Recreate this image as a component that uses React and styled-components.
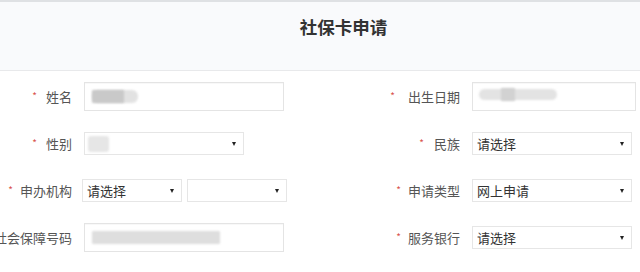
import styled, { createGlobalStyle } from "styled-components";

const GlobalStyle = createGlobalStyle`
    body {
        margin: 0;
        background: #ffffff;
        font-family: "Noto Sans CJK SC", "Noto Sans", sans-serif;
    }
`

const Page = styled.div`
    width: 640px;
    height: 272px;
    overflow: hidden;
    background: #ffffff;
`

const Header = styled.div`
    height: 68px;
    border-top: 2px solid #dfe1e4;
    border-bottom: 1px solid #e8e9eb;
    background: #f9fafc;
    display: flex;
    justify-content: center;
    align-items: flex-start;
    padding-left: 47px;
    box-sizing: content-box;
`

const Title = styled.h1`
    margin: 12px 0 0;
    font-size: 17.5px;
    font-weight: 700;
    color: #333333;
    letter-spacing: 0;
`

const Form = styled.div`
    padding-top: 2px;
`

const Row = styled.div`
    height: 47px;
    display: flex;
    align-items: center;
`

const Field = styled.div`
    width: ${p => p.$width}px;
    display: flex;
    align-items: center;
    flex-shrink: 0;
`

const Label = styled.div`
    width: ${p => p.$width}px;
    flex-shrink: 0;
    margin-right: 12px;
    text-align: right;
    white-space: nowrap;
    direction: rtl;
    font-size: 13px;
    color: #555555;
`

const Star = styled.span`
    color: #d9534f;
    font-size: 10px;
    margin-right: ${p => p.$gap}px;
    vertical-align: 2px;
`

const TextInput = styled.div`
    position: relative;
    width: ${p => p.$width}px;
    height: 29px;
    box-sizing: border-box;
    border: 1px solid #e4e4e4;
    background: #ffffff;
    box-shadow: inset 0 1px 1px rgba(0, 0, 0, 0.03);
`

const Select = styled.div`
    position: relative;
    width: ${p => p.$width}px;
    height: 23px;
    box-sizing: border-box;
    border: 1px solid #e6e6e6;
    background: #ffffff;
    display: flex;
    align-items: center;
    padding-left: 4px;
    font-size: 13px;
    color: #333333;
    & + & {
        margin-left: 5px;
    }
`

const Caret = styled.span`
    position: absolute;
    right: 7px;
    top: 9px;
    width: 0;
    height: 0;
    border-left: 2.5px solid transparent;
    border-right: 2.5px solid transparent;
    border-top: 4px solid #222222;
`

const Blur = styled.span`
    position: absolute;
    left: ${p => p.$x}px;
    top: ${p => p.$y}px;
    width: ${p => p.$w}px;
    height: ${p => p.$h}px;
    border-radius: ${p => p.$r || 3}px;
    background: ${p => p.$c};
    filter: blur(1.2px);
`

function Required({ text, gap = 8 }) {
    return (
        <span style={{ direction: "ltr", unicodeBidi: "isolate" }}>
            <Star $gap={gap}>*</Star>{text}
        </span>
    )
}

export default function App() {
    return (
        <Page>
            <GlobalStyle />
            <Header>
                <Title>社保卡申请</Title>
            </Header>
            <Form>
                <Row>
                    <Field $width={388}>
                        <Label $width={72}><Required text="姓名" gap={9} /></Label>
                        <TextInput $width={200}>
                            <Blur $x={7} $y={7} $w={46} $h={13} $r={6} $c="#e2e2e2" />
                            <Blur $x={7} $y={7} $w={32} $h={13} $r={1} $c="#c9c9c9" />
                        </TextInput>
                    </Field>
                    <Field $width={252}>
                        <Label $width={72}><Required text="出生日期" gap={13} /></Label>
                        <TextInput $width={164}>
                            <Blur $x={6} $y={6} $w={78} $h={11} $r={6} $c="#e3e3e3" />
                            <Blur $x={28} $y={5} $w={14} $h={13} $r={1} $c="#d2d2d2" />
                        </TextInput>
                    </Field>
                </Row>
                <Row>
                    <Field $width={388}>
                        <Label $width={72}><Required text="性别" gap={9} /></Label>
                        <Select $width={160}>
                            <Blur $x={3} $y={3} $w={21} $h={16} $r={3} $c="#e6e6e6" />
                            <Caret />
                        </Select>
                    </Field>
                    <Field $width={252}>
                        <Label $width={72}><Required text="民族" gap={10} /></Label>
                        <Select $width={160}>
                            请选择
                            <Caret />
                        </Select>
                    </Field>
                </Row>
                <Row>
                    <Field $width={388}>
                        <Label $width={72}><Required text="申办机构" gap={7} /></Label>
                        <Select $width={100} style={{ marginLeft: -2 }}>
                            请选择
                            <Caret />
                        </Select>
                        <Select $width={100}>
                            <Caret />
                        </Select>
                    </Field>
                    <Field $width={252}>
                        <Label $width={72}><Required text="申请类型" gap={7} /></Label>
                        <Select $width={160}>
                            网上申请
                            <Caret />
                        </Select>
                    </Field>
                </Row>
                <Row>
                    <Field $width={388}>
                        <Label $width={72}>社会保障号码</Label>
                        <TextInput $width={200}>
                            <Blur $x={7} $y={7} $w={128} $h={13} $r={1} $c="#dedede" />
                        </TextInput>
                    </Field>
                    <Field $width={252}>
                        <Label $width={72}><Required text="服务银行" gap={7} /></Label>
                        <Select $width={160}>
                            请选择
                            <Caret />
                        </Select>
                    </Field>
                </Row>
            </Form>
        </Page>
    )
}
